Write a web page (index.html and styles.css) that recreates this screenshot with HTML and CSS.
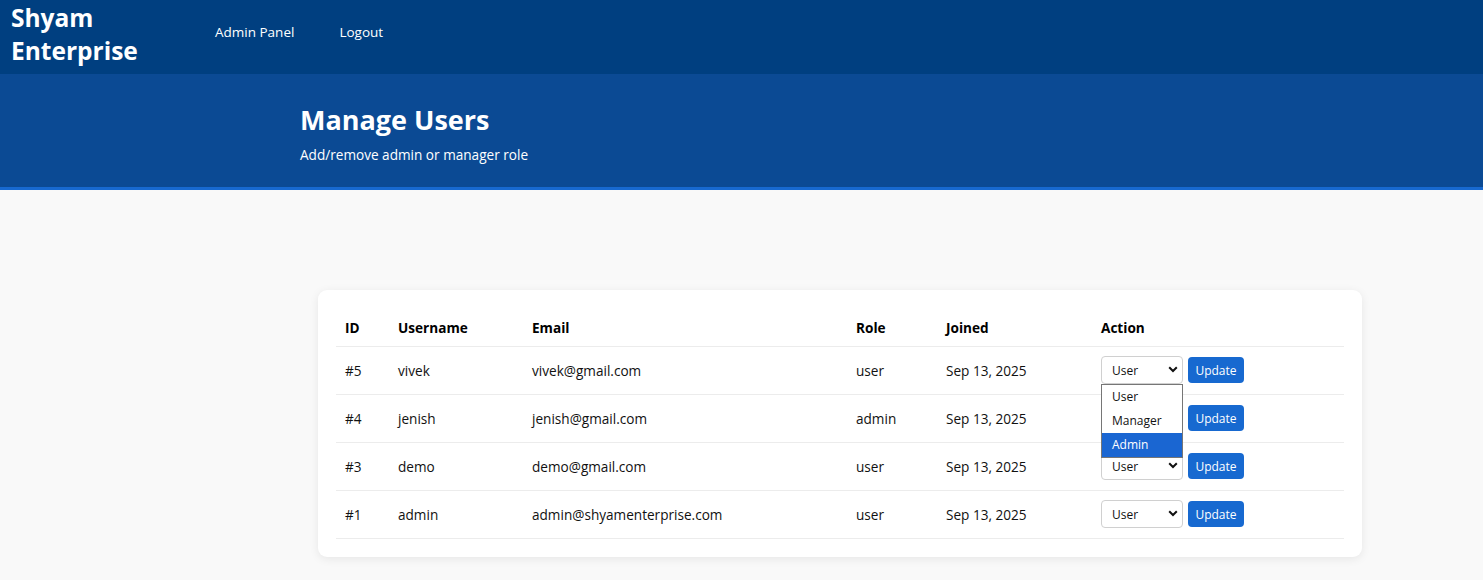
FILE: index.html
```html
<!DOCTYPE html>
<html lang="en">
<head>
<meta charset="utf-8">
<title>Manage Users - Shyam Enterprise</title>
<link rel="stylesheet" href="styles.css">
</head>
<body>
<header class="navbar">
  <div class="brand">Shyam Enterprise</div>
  <nav class="nav-links">
    <a href="#" class="nav-link">Admin Panel</a>
    <a href="#" class="nav-link">Logout</a>
  </nav>
</header>
<section class="hero">
  <div class="hero-inner">
    <h1 class="hero-title">Manage Users</h1>
    <p class="hero-sub">Add/remove admin or manager role</p>
  </div>
</section>
<main class="content">
  <div class="card">
    <table class="users">
      <colgroup>
        <col class="c-id"><col class="c-user"><col class="c-email"><col class="c-role"><col class="c-joined"><col class="c-action">
      </colgroup>
      <thead>
        <tr><th>ID</th><th>Username</th><th>Email</th><th>Role</th><th>Joined</th><th>Action</th></tr>
      </thead>
      <tbody>
        <tr>
          <td>#5</td><td>vivek</td><td>vivek@gmail.com</td><td>user</td><td>Sep 13, 2025</td>
          <td>
            <div class="action">
              <div class="select-wrap">
                <select class="role-select"><option>User</option><option>Manager</option><option>Admin</option></select>
                <svg class="chev" width="10" height="7" viewBox="0 0 10 7"><path d="M1.2 1.2 L5 5 L8.8 1.2" fill="none" stroke="#111" stroke-width="2"/></svg>
                <ul class="dropdown">
                  <li class="opt">User</li>
                  <li class="opt">Manager</li>
                  <li class="opt opt-active">Admin</li>
                </ul>
              </div>
              <button class="btn">Update</button>
            </div>
          </td>
        </tr>
        <tr>
          <td>#4</td><td>jenish</td><td>jenish@gmail.com</td><td>admin</td><td>Sep 13, 2025</td>
          <td>
            <div class="action">
              <div class="select-wrap">
                <select class="role-select"><option>User</option><option>Manager</option><option selected>Admin</option></select>
                <svg class="chev" width="10" height="7" viewBox="0 0 10 7"><path d="M1.2 1.2 L5 5 L8.8 1.2" fill="none" stroke="#111" stroke-width="2"/></svg>
              </div>
              <button class="btn">Update</button>
            </div>
          </td>
        </tr>
        <tr>
          <td>#3</td><td>demo</td><td>demo@gmail.com</td><td>user</td><td>Sep 13, 2025</td>
          <td>
            <div class="action">
              <div class="select-wrap">
                <select class="role-select"><option>User</option><option>Manager</option><option>Admin</option></select>
                <svg class="chev" width="10" height="7" viewBox="0 0 10 7"><path d="M1.2 1.2 L5 5 L8.8 1.2" fill="none" stroke="#111" stroke-width="2"/></svg>
              </div>
              <button class="btn">Update</button>
            </div>
          </td>
        </tr>
        <tr>
          <td>#1</td><td>admin</td><td>admin@shyamenterprise.com</td><td>user</td><td>Sep 13, 2025</td>
          <td>
            <div class="action">
              <div class="select-wrap">
                <select class="role-select"><option>User</option><option>Manager</option><option>Admin</option></select>
                <svg class="chev" width="10" height="7" viewBox="0 0 10 7"><path d="M1.2 1.2 L5 5 L8.8 1.2" fill="none" stroke="#111" stroke-width="2"/></svg>
              </div>
              <button class="btn">Update</button>
            </div>
          </td>
        </tr>
      </tbody>
    </table>
  </div>
</main>
</body>
</html>
```

FILE: styles.css
```css
* { box-sizing: border-box; }
html, body { margin: 0; padding: 0; }
body {
  font-family: "Open Sans", "Noto Sans", sans-serif;
  background: #f9f9f9;
  color: #111;
}
.navbar {
  background: #003f80;
  height: 74px;
  display: flex;
  align-items: flex-start;
  padding-left: 11px;
}
.brand {
  color: #fff;
  font-weight: 700;
  font-size: 24.5px;
  line-height: 33px;
  width: 152px;
  margin-top: 1px;
}
.nav-links {
  display: flex;
  gap: 45px;
  margin-left: 52px;
  padding-top: 23px;
}
.nav-link {
  color: #fff;
  text-decoration: none;
  font-size: 13.5px;
}
.hero {
  background: #0b4a94;
  border-bottom: 3px solid #1769d0;
  height: 116px;
  padding-left: 300px;
  padding-top: 28px;
}
.hero-title {
  margin: 0;
  color: #fff;
  font-size: 27px;
  line-height: 36px;
  font-weight: 700;
}
.hero-sub {
  margin: 7px 0 0;
  color: #fff;
  font-size: 13.6px;
}
.content {
  padding: 100px 0 24px 318px;
}
.card {
  width: 1044px;
  background: #fff;
  border-radius: 9px;
  box-shadow: 0 2px 10px rgba(0,0,0,0.08);
  padding: 18px;
}
.users {
  width: 100%;
  border-collapse: collapse;
  table-layout: fixed;
  font-size: 13.6px;
}
.c-id { width: 53px; }
.c-user { width: 134px; }
.c-email { width: 324px; }
.c-role { width: 90px; }
.c-joined { width: 155px; }
.c-action { width: 252px; }
.users th {
  text-align: left;
  font-weight: 700;
  color: #000;
  padding: 11px 9px 9px;
  line-height: 18px;
  border-bottom: 1px solid #ececec;
}
.users td {
  padding: 9px 9px 10px;
  height: 47.7px;
  border-bottom: 1px solid #ececec;
  color: #111;
  white-space: nowrap;
}
.action {
  display: flex;
  align-items: center;
  gap: 5px;
}
.select-wrap {
  position: relative;
  width: 82px;
  height: 28px;
}
.role-select {
  appearance: none;
  -webkit-appearance: none;
  width: 82px;
  height: 28px;
  border: 1px solid #d0d0d0;
  border-radius: 4px;
  background: #fff;
  font-family: inherit;
  font-size: 12px;
  color: #111;
  padding: 0 0 0 10px;
}
.chev {
  position: absolute;
  right: 5px;
  top: 10px;
  pointer-events: none;
}
.dropdown {
  position: absolute;
  left: 0;
  top: 28px;
  width: 82px;
  margin: 0;
  padding: 0;
  list-style: none;
  background: #fff;
  border: 1px solid #767676;
  z-index: 5;
}
.opt {
  height: 24px;
  line-height: 24px;
  padding-left: 10px;
  font-size: 12px;
  color: #111;
}
.opt-active {
  background: #1a66d2;
  color: #fff;
}
.btn {
  height: 26px;
  width: 56px;
  border: none;
  border-radius: 4px;
  background: #1769d0;
  color: #fff;
  font-family: inherit;
  font-size: 12px;
  padding: 0;
}
```
